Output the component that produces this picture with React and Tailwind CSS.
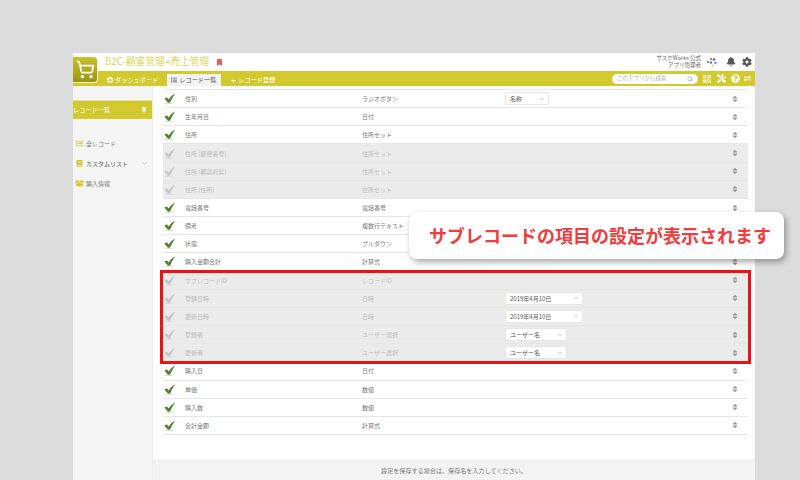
import React from "react";
import { Bell, ChevronDown, Search, ShoppingCart } from "lucide-react";
import {
  FaBook,
  FaBookmark,
  FaBoxOpen,
  FaCog,
  FaExchangeAlt,
  FaList,
  FaPlus,
  FaQuestionCircle,
  FaSort,
  FaTachometerAlt,
  FaThumbtack,
  FaTools,
} from "react-icons/fa";
import { BsQrCode } from "react-icons/bs";

const topRows = [
  { name: "性別", type: "ラジオボタン", select: "名称", selectWidth: "w-[44px]" },
  { name: "生年月日", type: "日付" },
  { name: "住所", type: "住所セット" },
  { name: "住所 (郵便番号)", type: "住所セット", off: true },
  { name: "住所 (都道府県)", type: "住所セット", off: true },
  { name: "住所 (住所)", type: "住所セット", off: true },
  { name: "電話番号", type: "電話番号" },
  { name: "備考", type: "複数行テキスト" },
  { name: "状態", type: "プルダウン" },
  { name: "購入金額合計", type: "計算式" },
];

const subRows = [
  { name: "サブレコードID", type: "レコードID", off: true },
  { name: "登録日時", type: "日時", off: true, select: "2019年4月10日", selectWidth: "w-[78px]" },
  { name: "更新日時", type: "日時", off: true, select: "2019年4月10日", selectWidth: "w-[78px]" },
  { name: "登録者", type: "ユーザー選択", off: true, select: "ユーザー名", selectWidth: "w-[62px]" },
  { name: "更新者", type: "ユーザー選択", off: true, select: "ユーザー名", selectWidth: "w-[62px]" },
];

const bottomRows = [
  { name: "購入日", type: "日付" },
  { name: "単価", type: "数値" },
  { name: "購入数", type: "数値" },
  { name: "合計金額", type: "計算式" },
];

const CheckMark = ({ off }) => (
  <svg width="12" height="11" viewBox="0 0 12 11">
    <ellipse cx="5" cy="10.2" rx="4.5" ry="0.7" fill="#dcdcdc" />
    <path
      d="M0.3 5.6 L3 4.6 L4.6 6.4 Q7 2.6 11.2 0.2 Q8.6 4 6 9.6 L4 9.8 Z"
      fill={off ? "#c6c6c6" : "#4f7f2c"}
    />
  </svg>
);

const Row = ({ row }) => (
  <div
    className={`flex h-[18.17px] items-center border-b border-[#e6e6e6] text-[6px] ${
      row.off ? "bg-[#ebebeb] text-[#bbbbbb]" : "text-[#777777]"
    }`}
  >
    <div className="w-[22px] pl-[1px]">
      <CheckMark off={row.off} />
    </div>
    <div className="w-[177px]">{row.name}</div>
    <div className="w-[143px]">{row.type}</div>
    <div className="flex-1">
      {row.select && (
        <div
          className={`flex h-[13px] items-center justify-between rounded-[2px] border border-[#e6e6e6] bg-white pl-[4px] pr-[3px] text-[#555555] ${row.selectWidth}`}
        >
          <span>{row.select}</span>
          <ChevronDown size={6} color="#888888" />
        </div>
      )}
    </div>
    <div className="flex w-[26px] pl-[9px]">
      <FaSort size={8} color="#999999" />
    </div>
  </div>
);

const NavItem = ({ icon, label, active }) => (
  <div
    className={`flex h-[12px] items-center gap-[2px] text-[6.2px] ${
      active ? "w-[54px] bg-[#f2f2f2] px-[4px] text-[#555555]" : "text-white"
    }`}
  >
    {icon}
    <span>{label}</span>
  </div>
);

const SideItem = ({ icon, label, bold, chevron }) => (
  <div className={`flex h-[20px] items-center whitespace-nowrap text-[6px] text-[#777777] ${bold ? "font-medium" : ""}`}>
    <div className="flex w-[13px] justify-center">{icon}</div>
    <span>{label}</span>
    {chevron && <ChevronDown size={7} color="#999999" className="ml-[13px]" />}
  </div>
);

export default function App() {
  return (
    <div
      className="h-[480px] w-[800px] overflow-hidden bg-[#dcdcdc] pl-[73px] pt-[53px]"
      style={{ fontFamily: '"Noto Sans CJK JP", "Liberation Sans", sans-serif' }}
    >
      <div className="relative flex h-[427px] w-[682px] flex-col bg-white">
        {/* header */}
        <div className="flex h-[18px] items-center pl-[32px] pr-[3px]">
          <span className="text-[9.7px] text-[#dcd658]">
            B2C-顧客管理<span style={{ fontFamily: '"Liberation Sans", sans-serif' }}>×</span>売上管理
          </span>
          <FaBookmark size={7} color="#d96464" className="ml-[7px]" />
          <div className="ml-auto text-right text-[5.5px] leading-[7px] text-[#666666]">
            <div>サスケWorks 公式</div>
            <div>アプリ管理者</div>
          </div>
          <svg width="12" height="10" viewBox="0 0 12 10" className="ml-[5px]">
            <circle cx="2" cy="5" r="1.2" fill="#6aa84f" />
            <circle cx="5" cy="2" r="1.2" fill="#e06666" />
            <circle cx="8" cy="2.5" r="1.2" fill="#674ea7" />
            <circle cx="5" cy="5.5" r="1.2" fill="#3d85c6" />
            <circle cx="9.5" cy="6" r="1.2" fill="#8e7cc3" />
            <circle cx="6.5" cy="8.5" r="1.1" fill="#f1c232" />
          </svg>
          <Bell size={10} color="#555555" fill="#555555" className="ml-[8px]" />
          <FaCog size={10} color="#555555" className="ml-[6px]" />
        </div>

        {/* yellow bar */}
        <div className="flex h-[15px] items-end bg-[#d2c92f] pl-[34px] pr-[4px]">
          <NavItem
            label="ダッシュボード"
            icon={
              <span className="flex h-[6px] w-[6px] items-center justify-center rounded-full bg-white">
                <FaTachometerAlt size={4} color="#d2c92f" />
              </span>
            }
          />
          <div className="ml-[9px]">
            <NavItem active label="レコード一覧" icon={<FaList size={6} color="#555555" />} />
          </div>
          <div className="ml-[10px]">
            <NavItem label="レコード登録" icon={<FaPlus size={5} color="#ffffff" />} />
          </div>
          <div className="ml-auto flex items-center self-center">
            <div className="flex h-[10px] w-[86px] items-center justify-between rounded-full bg-white px-[5px] text-[5.5px] text-[#b5b5b5]">
              <span>このアプリから検索</span>
              <Search size={6} color="#888888" />
            </div>
            <BsQrCode size={8} color="#ffffff" className="ml-[5px]" />
            <FaTools size={9} color="#ffffff" className="ml-[6px]" />
            <FaQuestionCircle size={9} color="#ffffff" className="ml-[5px]" />
            <FaExchangeAlt size={7} color="#ffffff" className="ml-[4px]" />
          </div>
        </div>

        <div className="flex min-h-0 flex-1">
          {/* sidebar */}
          <div className="w-[80px] shrink-0 border-r border-[#ececec] bg-[#f5f5f5] pt-[14px]">
            <div className="flex h-[19px] items-center justify-between border-t border-[#e6e2a0] bg-[#d2c92f] pr-[5px] text-[6.2px] text-white">
              <span>レコード一覧</span>
              <FaThumbtack size={6} color="#ffffff" />
            </div>
            <div className="mt-[14px]">
              <SideItem label="全レコード" icon={<FaList size={7} color="#d2c92f" />} />
              <SideItem bold chevron label="カスタムリスト" icon={<FaBook size={7} color="#d2c92f" />} />
              <SideItem label="購入情報" icon={<FaBoxOpen size={9} color="#d2c92f" />} />
            </div>
          </div>

          {/* main */}
          <div className="flex min-w-0 flex-1 flex-col">
            <div className="flex-1 pl-[10px] pr-[7px] pt-[3px]">
              <div className="border-t border-[#e6e6e6]">
                {topRows.map((row) => (
                  <Row key={row.name} row={row} />
                ))}
                <div className="relative">
                  {subRows.map((row) => (
                    <Row key={row.name} row={row} />
                  ))}
                  <div className="absolute -inset-x-[3px] -bottom-[2px] -top-[2px] border-[3px] border-[#ee1111]" />
                </div>
                {bottomRows.map((row) => (
                  <Row key={row.name} row={row} />
                ))}
              </div>
            </div>
            <div className="flex h-[21px] items-center justify-center bg-[#f3f3f3] pt-[3px] text-[6.1px] text-[#777777]">
              設定を保存する場合は、保存名を入力してください。
            </div>
          </div>
        </div>

        {/* logo */}
        <div className="absolute left-0 top-[4px] flex h-[26px] w-[25px] items-center justify-center rounded-br-[4px] rounded-tr-[4px] border-b border-r border-[#f4f2c8] bg-gradient-to-b from-[#c9c12c] to-[#9c9512]">
          <ShoppingCart size={19} color="#ffffff" strokeWidth={2.2} />
        </div>

        {/* callout */}
        <div className="absolute left-[336px] top-[159px] flex h-[47px] w-[375px] items-center rounded-lg bg-white pl-[20px] text-[18px] font-bold text-[#f03c3c] shadow-[2px_3px_6px_rgba(0,0,0,0.35)]">
          サブレコードの項目の設定が表示されます
        </div>
      </div>
    </div>
  );
}
